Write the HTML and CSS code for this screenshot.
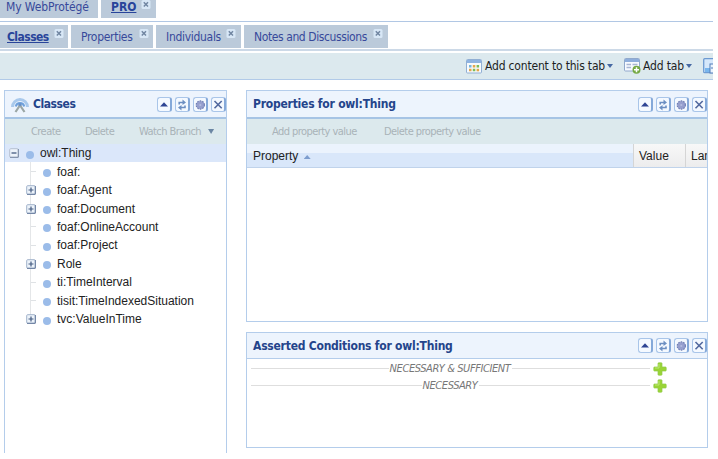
FILE: index.html
```html
<!DOCTYPE html>
<html lang="en">
  <head>
    <meta charset="UTF-8" />
    <title>WebProtégé - PRO</title>
    <link rel="stylesheet" href="styles.css">
  </head>
  <body>
    <!-- shared icons -->
    <svg class="sprite" width="0" height="0">
      <symbol id="up" viewBox="1 1 12 12"><path d="M3 9 7 4.800 11 9z" fill="#2d4494" /></symbol>
      <symbol id="refresh" viewBox="1 1 12 12">
        <path d="M4.200 7V5H8M10 8v2H6" fill="none" stroke="#6c8fc2" stroke-width="1.600" />
        <path d="M7.500 2 11 5 7.500 7.500zM6.500 7.500 3 10l3.500 3z" fill="#6c8fc2" />
      </symbol>
      <symbol id="gear" viewBox="1 1 12 12">
        <circle cx="7.300" cy="7.500" r="4" fill="#969fce" />
        <circle cx="7.300" cy="7.500" r="4.100" fill="none" stroke="#7180b5" stroke-width="1.200" stroke-dasharray="1.6 1" />
        <circle cx="7.300" cy="7.500" r="1.100" fill="#b4bce0" />
      </symbol>
      <symbol id="close" viewBox="1 1 12 12"><path d="m3.500 3.500 7.200 7.200m0-7.200-7.200 7.200" stroke="#53699f" stroke-width="1.600" /></symbol>
      <symbol id="tab-close" viewBox="0 0 9 9">
        <rect width="9" height="9" rx="1.5" fill="#d8e7f6" />
        <path d="m2.3 2.3 4.2 4.2m0-4.2L2.3 6.5" stroke="#7186a2" stroke-width="1.5" />
      </symbol>
      <symbol id="plus" viewBox="0 0 14 14">
        <path d="M5 1.5q0-.7.7-.7h2.6q.7 0 .7.7V5h3.5q.7 0 .7.7v2.6q0 .7-.7.7H9v3.5q0 .7-.7.7H5.7q-.7 0-.7-.7V9H1.500q-.7 0-.7-.7V5.700q0-.7.7-.7H5z" fill="#9ad436" stroke="#8fca48" stroke-width=".7" />
        <path d="M6 2v4H2" fill="none" stroke="#bce774" />
      </symbol>
      <symbol id="expand" viewBox="0 0 10 10">
        <rect x=".7" y=".7" width="8.600" height="8.600" rx="1" fill="#edf3fa" stroke="#a0b2ca" />
        <path d="M9.300 1v8.300H1" fill="none" stroke="#64799b" />
        <path d="M2.500 5h5M5 2.500v5" stroke="#435a80" stroke-width="1.200" />
      </symbol>
      <symbol id="collapse" viewBox="0 0 10 10">
        <rect x=".7" y=".7" width="8.600" height="8.600" rx="1" fill="#edf3fa" stroke="#b6c1d2" />
        <path d="M9.300 1v8.300H1" fill="none" stroke="#7889a3" />
        <path d="M2.500 5h5" stroke="#435a80" stroke-width="1.300" />
      </symbol>
    </svg>

    <div class="page">
      <nav class="tabs projects">
        <a class="tab my"><span>My WebProtégé</span></a>
        <a class="tab active pro"><span>PRO</span><svg><use href="#tab-close" /></svg></a>
      </nav>

      <nav class="tabs views">
        <a class="tab active classes"><span>Classes</span><svg><use href="#tab-close" /></svg></a>
        <a class="tab properties"><span>Properties</span><svg><use href="#tab-close" /></svg></a>
        <a class="tab individuals"><span>Individuals</span><svg><use href="#tab-close" /></svg></a>
        <a class="tab notes"><span>Notes and Discussions</span><svg><use href="#tab-close" /></svg></a>
      </nav>

      <div class="toolbar">
        <svg class="icon" viewBox="0 0 16 15">
          <rect x=".5" y=".5" width="15" height="13.500" rx="1" fill="#f7fafc" stroke="#91afd4" />
          <path d="M1 1h14v3H1z" fill="#8eb3e1" />
          <path d="M3 6h2.500v2.500H3z" fill="#79b5dc" /><path d="M6.800 6h2.500v2.500H6.800zM3 9.800h2.500v2.500H3z" fill="#e5a64c" />
          <path d="M10.600 6h2.500v2.500h-2.500zM6.800 9.800h2.500v2.500H6.800z" fill="#7cbc58" /><path d="M10.600 9.800h2.500v2.500h-2.500z" fill="#e5a64c" />
        </svg>
        <span class="add-content">Add content to this tab</span>
        <i class="caret"></i>
        <svg class="icon add-tab-icon" viewBox="0 0 17 16">
          <rect x=".5" y=".5" width="15" height="12.500" rx="1" fill="#f7faff" stroke="#91a9cc" />
          <path d="M1 1h14v3H1z" fill="#8eaedc" />
          <path d="M2.500 6.500H7M2.500 9.500H7M8.500 6.500h5" stroke="#a9b6d3" stroke-width="1.300" />
          <circle cx="12.500" cy="11.700" r="4" fill="#75a943" />
          <path d="M10 11.700h5M12.500 9.200v5" stroke="#fff" stroke-width="1.500" />
        </svg>
        <span class="add-tab">Add tab</span>
        <i class="caret"></i>
        <svg class="icon cut-icon" viewBox="0 0 16 16">
          <rect x=".7" y=".7" width="13" height="14" rx="1" fill="#d6e8fb" stroke="#6e9bd2" stroke-width="1.300" />
          <path d="M2 10h5v4H2z" fill="#79b6ed" />
          <rect x="7" y="6" width="8" height="9" fill="#e9f3fd" stroke="#527fba" />
          <path d="M8 10h6" stroke="#527fba" />
        </svg>
      </div>

      <main>
        <section class="panel tree-panel">
          <header>
            <svg class="logo" viewBox="0 0 18 17">
              <path d="M1.500 11a7.500 7.500 0 0 1 15 0" fill="none" stroke="#a9c9ec" stroke-width="3" />
              <path d="M4.800 10.500a4.300 4.300 0 0 1 8.400 0" fill="none" stroke="#6fa1dc" stroke-width="2" />
              <circle cx="9" cy="9" r="1.800" fill="#6a91c6" />
              <path d="m8.500 10-4 6M9.500 10l4 6" stroke="#9ba6a5" stroke-width="2.200" />
            </svg>
            <h2 class="t-classes">Classes</h2>
            <div class="tools">
              <svg><use href="#up" /></svg><svg><use href="#refresh" /></svg><svg><use href="#gear" /></svg><svg><use href="#close" /></svg>
            </div>
          </header>
          <div class="actions">
            <span class="create">Create</span>
            <span class="delete">Delete</span>
            <span class="watch">Watch Branch</span>
            <i class="caret"></i>
          </div>
          <ul class="tree">
            <li class="root"><svg><use href="#collapse" /></svg><b></b><span>owl:Thing</span></li>
            <li><em></em><b></b><span>foaf:</span></li>
            <li><svg><use href="#expand" /></svg><b></b><span>foaf:Agent</span></li>
            <li><svg><use href="#expand" /></svg><b></b><span>foaf:Document</span></li>
            <li><em></em><b></b><span>foaf:OnlineAccount</span></li>
            <li><em></em><b></b><span>foaf:Project</span></li>
            <li><svg><use href="#expand" /></svg><b></b><span>Role</span></li>
            <li><em></em><b></b><span>ti:TimeInterval</span></li>
            <li><em></em><b></b><span>tisit:TimeIndexedSituation</span></li>
            <li><svg><use href="#expand" /></svg><b></b><span>tvc:ValueInTime</span></li>
          </ul>
        </section>

        <div class="column">
          <section class="panel props-panel">
            <header>
              <h2>Properties for owl:Thing</h2>
              <div class="tools">
                <svg><use href="#up" /></svg><svg><use href="#refresh" /></svg><svg><use href="#gear" /></svg><svg><use href="#close" /></svg>
              </div>
            </header>
            <div class="actions">
              <span class="add-value">Add property value</span>
              <span class="delete-value">Delete property value</span>
            </div>
            <div class="grid-head">
              <div class="col sorted">Property <i class="asc"></i></div>
              <div class="col value">Value</div>
              <div class="col lang">Lang</div>
            </div>
          </section>

          <section class="panel cond-panel">
            <header>
              <h2>Asserted Conditions for owl:Thing</h2>
              <div class="tools">
                <svg><use href="#up" /></svg><svg><use href="#refresh" /></svg><svg><use href="#gear" /></svg><svg><use href="#close" /></svg>
              </div>
            </header>
            <div class="conditions">
              <div class="rule"><span>NECESSARY &amp; SUFFICIENT</span><svg><use href="#plus" /></svg></div>
              <div class="rule"><span>NECESSARY</span><svg><use href="#plus" /></svg></div>
            </div>
          </section>
        </div>
      </main>
    </div>
  </body>
</html>
```
FILE: styles.css
```css
* {
  box-sizing: border-box;
}

body {
  margin: 0;
  background: #fff;
  font-family: "DejaVu Sans Condensed", "DejaVu Sans", sans-serif;
  font-size: 12px;
  overflow: hidden;
}

.sprite {
  display: none;
}

.page {
  width: 713px;
  height: 453px;
  overflow: hidden;
  white-space: nowrap;
}

/* tabs */
.tabs {
  display: flex;
  gap: 3px;
}

.projects {
  height: 22px;
  border-bottom: 1px solid #b1c7e4;
}

.views {
  height: 29px;
  padding-top: 3px;
  border-bottom: 2px solid #ccd9e7;
}

.tab {
  display: flex;
  background: #bbcada;
  color: #37499a;
  letter-spacing: -0.3px;

  svg {
    flex: none;
    width: 10px;
    height: 9px;
    margin-left: auto;
  }

  &.active {
    font-weight: bold;
    text-decoration: underline;
    color: #28449a;
  }
}

.projects .tab {
  height: 18px;
  line-height: 15px;
}

.views .tab {
  height: 23px;
  line-height: 24px;

  svg {
    margin-top: 4px;
  }
}

.my {
  width: 98px;
  padding-left: 6px;
  letter-spacing: -0.1px;
}

.pro {
  width: 55px;
  padding: 0 5px 0 10px;
  letter-spacing: 0;
}

.classes {
  width: 68px;
  padding: 0 4px 0 7px;
  letter-spacing: -0.55px;
}

.properties {
  width: 82px;
  padding: 0 4px 0 10px;
}

.individuals {
  width: 85px;
  padding: 0 5px 0 10px;
}

.notes {
  width: 144px;
  padding: 0 5px 0 10px;
  letter-spacing: -0.4px;
}

/* main toolbar */
.toolbar {
  display: flex;
  align-items: center;
  height: 27px;
  margin-top: 2px;
  padding-left: 466px;
  background: #dce9ee;
  border-bottom: 1px solid #b1cae8;
  color: #1c1f24;

  span {
    flex: none;
  }

  .icon {
    width: 16px;
    height: 15px;
    flex: none;
  }

  .add-content {
    width: 122px;
    margin-left: 3px;
    letter-spacing: -0.18px;
  }

  .add-tab-icon {
    width: 17px;
    height: 16px;
    margin-left: 11px;
  }

  .add-tab {
    width: 43px;
    margin-left: 2px;
    letter-spacing: -0.15px;
  }

  .cut-icon {
    width: 16px;
    height: 16px;
    margin-left: 11px;
  }
}

.caret {
  flex: none;
  width: 6px;
  height: 4px;
  background: #4668a3;
  clip-path: polygon(0 0, 100% 0, 50% 100%);
}

/* panels */
main {
  display: flex;
  gap: 19px;
  padding: 10px 4px 0 4px;
}

.panel {
  border: 1px solid #b4cdeb;

  header {
    display: flex;
    align-items: center;
    height: 26px;
    padding-left: 6px;
    background: #edf4fd;
  }

  h2 {
    margin: 0;
    font-size: 12px;
    letter-spacing: -0.23px;
    color: #24448b;
  }

  .t-classes {
    letter-spacing: -0.45px;
  }
}

.tools {
  display: flex;
  gap: 3px;
  margin-left: auto;

  svg {
    width: 15px;
    height: 15px;
    background: #f4f9ff;
    border: 1px solid #a9c5e9;
    border-right: 2px solid #85a9d9;
    border-radius: 3px;
  }
}

.actions {
  display: flex;
  align-items: center;
  height: 27px;
  border-top: 2px solid #a6c4e5;
  background: #dce9ed;
  color: #a9b3b8;
  font-size: 11px;
  letter-spacing: -0.56px;
}

.tree-panel {
  width: 223px;
  height: 364px;
  border-bottom: 0;

  .caret {
    margin-left: 7px;
    background: #6b86a3;
    height: 5px;
  }
}

.logo {
  width: 18px;
  height: 17px;
  margin-right: 4px;
}

.create {
  width: 54px;
  margin-left: 26px;
}

.delete {
  width: 54px;
}

/* class tree */
.tree {
  margin: 0;
  padding: 0;
  list-style: none;
  font: 12px "Liberation Sans", Arial, sans-serif;
  color: #222;

  li {
    display: flex;
    align-items: center;
    height: 18.45px;
    padding-left: 21px;
    background: linear-gradient(#e4e6e8, #e4e6e8) 25px 0 / 1px 100% no-repeat;
  }

  li:last-child {
    background-size: 1px 50%;
  }

  svg,
  em {
    width: 10px;
    height: 10px;
    flex: none;
  }

  em {
    height: 1px;
    background: linear-gradient(90deg, transparent 5px, #dfe2e5 5px);
  }

  b {
    width: 8px;
    height: 8px;
    margin: 3px 6px 0 7px;
    border-radius: 50%;
    background: #9bbce9;
  }

  .root {
    padding-left: 4px;
    background: #dbe7fa;
  }
}

.column {
  width: 462px;
}

.props-panel {
  height: 232px;
}

.add-value {
  width: 112px;
  margin-left: 25px;
}

.grid-head {
  display: flex;
  height: 24px;
  overflow: hidden;
  border-bottom: 1px solid #c0d3eb;
  font: 12px/24px "Liberation Sans", Arial, sans-serif;
  color: #222;
}

.col {
  flex: none;
  padding-left: 5px;
  background: linear-gradient(#f8f8f8, #ececed);
  border-left: 1px solid #d5d5d5;
}

.sorted {
  width: 386px;
  padding-left: 6px;
  border-left: 0;
  background: linear-gradient(#ebf3fd 40%, #d9e7fa 40%);
}

.asc {
  display: inline-block;
  width: 7px;
  height: 4px;
  margin: 0 0 1px 2px;
  background: #7d9dce;
  clip-path: polygon(50% 0, 100% 100%, 0 100%);
}

.value {
  width: 52px;
}

.lang {
  width: 60px;
}

.cond-panel {
  height: 116px;
  margin-top: 10px;

  header {
    border-bottom: 1px solid #b4cdeb;
  }
}

.conditions {
  padding: 1px 40px 0 4px;
  font-size: 11px;
  font-style: italic;
  letter-spacing: -0.42px;
  color: #777;
}

.rule {
  display: flex;
  align-items: center;
  height: 17px;

  &::before,
  &::after {
    content: "";
    flex: 1;
    height: 1px;
    background: #dedede;
  }

  span {
    margin: 0 2px 0 1px;
  }

  svg {
    order: 1;
    width: 14px;
    height: 14px;
    margin-left: 3px;
  }
}
```
